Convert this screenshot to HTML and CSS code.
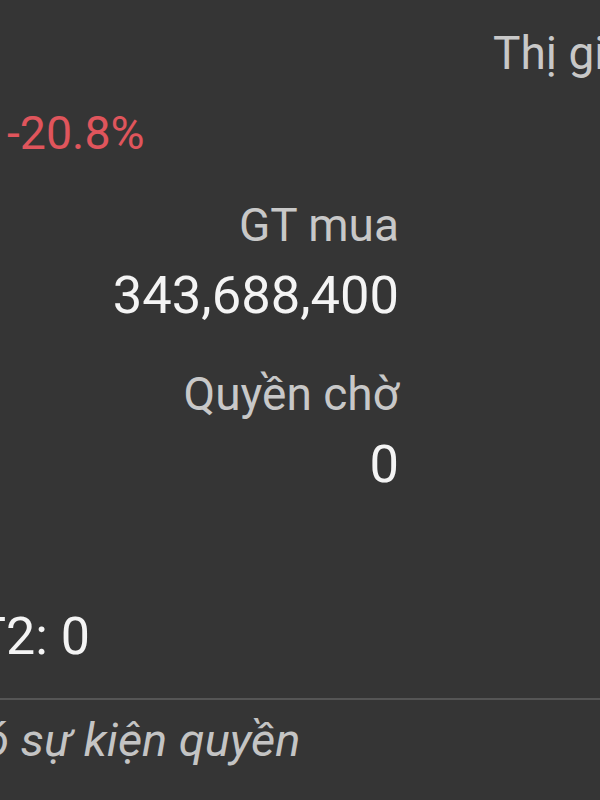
FILE: index.html
```html
<!DOCTYPE html>
<html>
<head>
    <title>Danh mục</title>
    <link rel="stylesheet" href="styles.css">
</head>
<body>
    <div class="screen">
        <div class="stats">
            <div class="label price-label">Thị giá</div>
            <div class="change down">-20.8%</div>
            <div class="stat stat-buy">
                <div class="label">GT mua</div>
                <div class="value">343,688,400</div>
            </div>
            <div class="stat stat-rights">
                <div class="label">Quyền chờ</div>
                <div class="value">0</div>
            </div>
        </div>
        <div class="pending">T2: 0</div>
        <div class="divider"></div>
        <div class="empty-note">Không có sự kiện quyền</div>
    </div>
</body>
</html>
```

FILE: styles.css
```css
body {
    margin: 0;
    background-color: #353535;
    font-family: Roboto, "Liberation Sans", sans-serif;
    overflow: hidden;
}

.screen {
    width: 600px;
    height: 800px;
    overflow: hidden;
}

.stats {
    display: grid;
    grid-template-columns: 90px 309px 1fr;
    padding-top: 13px;
    white-space: nowrap;
}

.label {
    font-size: 46px;
    line-height: 64px;
    color: #c8c8c8;
}

.value {
    font-size: 52.5px;
    line-height: 76px;
    color: #f4f4f4;
}

.price-label {
    grid-column: 3;
    grid-row: 1;
    line-height: 80px;
    padding-left: 94px;
}

.change {
    grid-column: 1;
    grid-row: 2;
    font-size: 46.5px;
    line-height: 80px;
    padding-left: 7px;
}

.down {
    color: #e0555c;
}

.stat {
    grid-column: 2;
    text-align: right;
}

.stat-buy {
    grid-row: 3;
    margin-top: 20px;
}

.stat-rights {
    grid-row: 4;
    margin-top: 29px;
}

.pending {
    margin-top: 97px;
    margin-left: -25px;
    font-size: 52px;
    line-height: 76px;
    color: #f4f4f4;
    white-space: nowrap;
}

.divider {
    margin-top: 23px;
    height: 2px;
    background-color: #555555;
}

.empty-note {
    margin-left: -183px;
    font-size: 47px;
    font-style: italic;
    line-height: 80px;
    color: #c4c4c4;
    white-space: nowrap;
}
```
